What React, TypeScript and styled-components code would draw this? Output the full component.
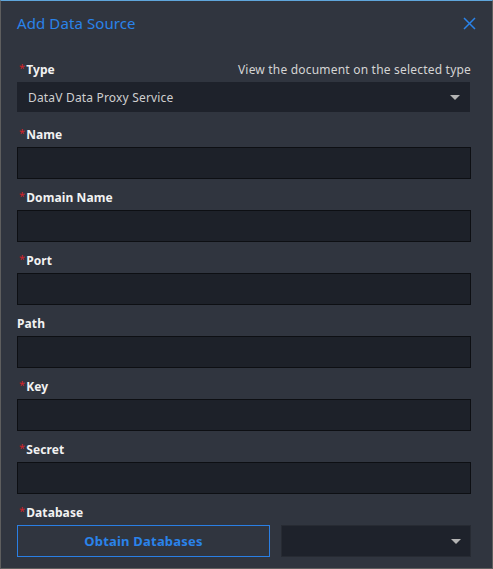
import React from "react";
import styled, { createGlobalStyle } from "styled-components";

const Global = createGlobalStyle`
  html, body { margin: 0; padding: 0; background: #30353f; }
  * { box-sizing: border-box; }
`;

const Dialog = styled.div`
  width: 493px;
  height: 569px;
  background: #30353f;
  border: 1px solid #5e5e5e;
  border-top: 1px solid #5fa6dc;
  font-family: "Noto Sans", "Open Sans", sans-serif;
  display: flex;
  flex-direction: column;
`;

const Header = styled.div`
  height: 45px;
  display: flex;
  align-items: center;
  justify-content: space-between;
  padding: 0 16px 0 16px;
`;

const Title = styled.div`
  color: #2a83ea;
  font-size: 15px;
  line-height: 20px;
  margin-top: -1px;
  letter-spacing: 0.1px;
`;

const Close = styled.button`
  width: 14px;
  height: 14px;
  padding: 0;
  border: 0;
  background: transparent;
  display: flex;
  align-items: center;
  justify-content: center;
  cursor: pointer;
`;

const Body = styled.div`
  padding: 14px 21px 0 16px;
  display: flex;
  flex-direction: column;
`;

const Item = styled.div<{ $mb: number }>`
  display: flex;
  flex-direction: column;
  margin-bottom: ${(p) => p.$mb}px;
`;

const LabelRow = styled.div`
  display: flex;
  justify-content: space-between;
  align-items: center;
  height: 18px;
  margin-bottom: 4px;
`;

const Label = styled.label`
  color: #f2f2f2;
  font-size: 12px;
  font-weight: 700;
  line-height: 18px;
  display: flex;
  align-items: center;
  margin-top: 2px;
  letter-spacing: 0.1px;
`;

const Star = styled.span`
  color: #d2232a;
  font-size: 11px;
  font-weight: 400;
  margin-right: 1px;
  margin-top: -4px;
  margin-left: 2px;
`;

const DocLink = styled.span`
  color: #d4d4d4;
  font-size: 12px;
  line-height: 18px;
  letter-spacing: 0.2px;
  margin-top: 2px;
`;

const Select = styled.div<{ $h: number }>`
  height: ${(p) => p.$h}px;
  background: #1e222b;
  display: flex;
  align-items: center;
  justify-content: space-between;
  padding: 0 10px 0 11px;
  color: #cfcfcf;
  font-size: 12px;
  letter-spacing: 0.18px;
`;

const Caret = styled.span`
  width: 0;
  height: 0;
  border-left: 5px solid transparent;
  border-right: 5px solid transparent;
  border-top: 5px solid #b4b4b4;
`;

const Input = styled.input`
  height: 32px;
  width: 100%;
  background: #1d2129;
  border: 1px solid #0d0f13;
  outline: none;
  color: #ddd;
  font-family: inherit;
  font-size: 12px;
  padding: 0 10px;
`;

const DbRow = styled.div`
  display: flex;
  gap: 11px;
`;

const ObtainButton = styled.button`
  width: 253px;
  height: 32px;
  background: transparent;
  border: 1px solid #2a7fe4;
  color: #2a83ea;
  font-family: inherit;
  font-size: 13px;
  font-weight: 700;
  letter-spacing: 0.2px;
  padding: 0;
  cursor: pointer;
`;

const TypeSelect = styled(Select)`
  margin-right: 1px;
`;

const DbSelect = styled(Select)`
  flex: 1;
  border: 1px solid #272b33;
  padding-right: 9px;
`;

const fields: { name: string; required: boolean }[] = [
  { name: "Name", required: true },
  { name: "Domain Name", required: true },
  { name: "Port", required: true },
  { name: "Path", required: false },
  { name: "Key", required: true },
  { name: "Secret", required: true },
];

export default function App() {
  return (
    <>
      <Global />
      <Dialog>
        <Header>
          <Title>Add Data Source</Title>
          <Close aria-label="close">
            <svg width="13" height="13" viewBox="0 0 13 13">
              <path d="M1 1 L12 12 M12 1 L1 12" stroke="#2a83ea" strokeWidth="1.5" />
            </svg>
          </Close>
        </Header>
        <Body>
          <Item $mb={13}>
            <LabelRow>
              <Label>
                <Star>*</Star>Type
              </Label>
              <DocLink>View the document on the selected type</DocLink>
            </LabelRow>
            <TypeSelect $h={30}>
              <span>DataV Data Proxy Service</span>
              <Caret />
            </TypeSelect>
          </Item>
          {fields.map((f) => (
            <Item $mb={9} key={f.name}>
              <LabelRow>
                <Label>
                  {f.required && <Star>*</Star>}
                  {f.name}
                </Label>
              </LabelRow>
              <Input />
            </Item>
          ))}
          <Item $mb={0}>
            <LabelRow>
              <Label>
                <Star>*</Star>Database
              </Label>
            </LabelRow>
            <DbRow>
              <ObtainButton>Obtain Databases</ObtainButton>
              <DbSelect $h={32}>
                <span />
                <Caret />
              </DbSelect>
            </DbRow>
          </Item>
        </Body>
      </Dialog>
    </>
  );
}
